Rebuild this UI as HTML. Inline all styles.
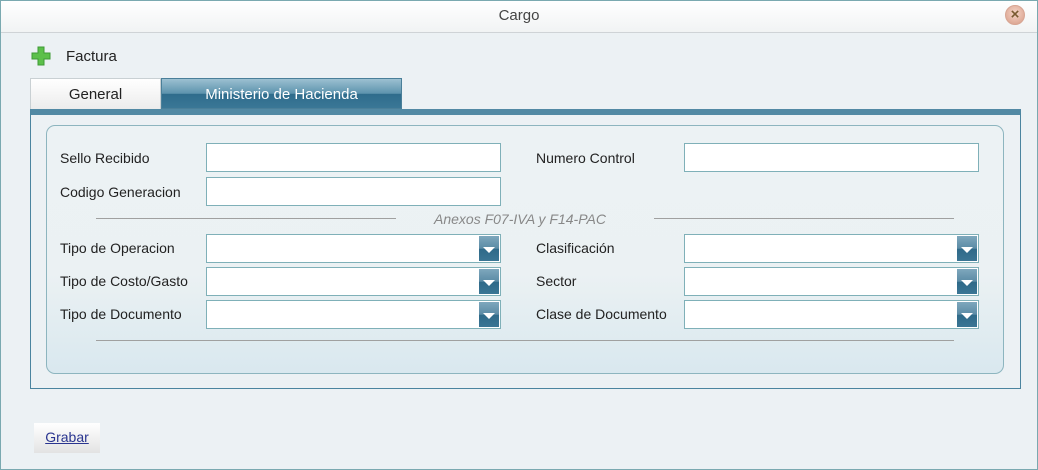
<!DOCTYPE html>
<html><head><style>
*{box-sizing:border-box;margin:0;padding:0}
body{width:1038px;height:470px;overflow:hidden;font-family:"Liberation Sans",Tahoma,sans-serif;font-size:14px;color:#222}
.win{position:absolute;left:0;top:0;width:1038px;height:470px;box-shadow:inset 0 0 0 1px #7aa9b0;background:#ecf1f4}
.title{position:absolute;left:1px;top:1px;width:1036px;height:32px;background:linear-gradient(#fff,#f1f3f4);border-bottom:1px solid #cfd3d6;text-align:center;line-height:30px;font-size:15px;color:#444}
.close{position:absolute;left:1005px;top:5px;width:20px;height:20px;border-radius:50%;background:radial-gradient(circle at 50% 40%,#f6d6c8,#d69a86);border:1px solid #d7a593;text-align:center;line-height:17px;color:#7a5a30;font-size:15px;font-weight:bold}
.abs{position:absolute}
.tab1{left:30px;top:78px;width:131px;height:31px;background:linear-gradient(#fff,#ececec);border:1px solid #c9d0d3;border-bottom:none;text-align:center;line-height:32px;font-size:15px}
.tab2{left:161px;top:78px;width:241px;height:31px;background:linear-gradient(#9cc0d1,#5d93ad 50%,#2f6c8c 52%,#3a7796);border:1px solid #4a7f99;text-align:center;line-height:32px;font-size:15px;color:#fff}
.panel{left:30px;top:109px;width:991px;height:280px;border:1px solid #4b849f;border-top:6px solid #5289a4;background:#ecf1f4}
.box{left:46px;top:125px;width:958px;height:249px;border:1px solid #8db5bf;border-radius:9px;background:linear-gradient(#ecf2f4,#ebf1f3 60%,#d9e8ef)}
.lbl{position:absolute;font-size:14px}
.in{position:absolute;width:295px;height:29px;border:1px solid #7fb0b8;background:#fff}
.dd::after{content:"";position:absolute;right:1px;top:1px;width:20px;height:25px;background:linear-gradient(#7ea7bd,#5b8ba5 50%,#2f6a89 52%,#3a7594)}
.dd::before{content:"";position:absolute;right:5px;top:12px;border-left:6px solid transparent;border-right:6px solid transparent;border-top:6px solid #fff;z-index:2}
.hr{position:absolute;height:1px;background:#a0a0a0}
.btn{left:34px;top:423px;width:66px;height:30px;background:linear-gradient(#fff,#e3e3e3);text-align:center;line-height:29px;color:#2a3590;text-decoration:underline;font-size:14px}
</style></head><body>
<div class="win"></div>
<div class="title">Cargo</div>
<div class="close">×</div>
<svg class="abs" style="left:31px;top:46px" width="20" height="20" viewBox="0 0 20 20"><path d="M7 1h6v6h6v6h-6v6H7v-6H1V7h6z" fill="#5cc04a" stroke="#3e9a35" stroke-width="1"/></svg>
<div class="abs" style="left:66px;top:48px;font-size:15px">Factura</div>
<div class="abs panel"></div>
<div class="abs tab1">General</div>
<div class="abs tab2">Ministerio de Hacienda</div>
<div class="abs box"></div>
<div class="lbl" style="left:60px;top:150px">Sello Recibido</div>
<div class="in" style="left:206px;top:143px"></div>
<div class="lbl" style="left:536px;top:150px">Numero Control</div>
<div class="in" style="left:684px;top:143px"></div>
<div class="lbl" style="left:60px;top:184px">Codigo Generacion</div>
<div class="in" style="left:206px;top:177px"></div>
<div class="hr" style="left:96px;top:218px;width:300px"></div>
<div class="hr" style="left:654px;top:218px;width:300px"></div>
<div class="lbl" style="left:434px;top:211px;color:#888;font-style:italic">Anexos F07-IVA y F14-PAC</div>
<div class="lbl" style="left:60px;top:240px">Tipo de Operacion</div>
<div class="in dd" style="left:206px;top:234px"></div>
<div class="lbl" style="left:536px;top:240px">Clasificación</div>
<div class="in dd" style="left:684px;top:234px"></div>
<div class="lbl" style="left:60px;top:273px">Tipo de Costo/Gasto</div>
<div class="in dd" style="left:206px;top:267px"></div>
<div class="lbl" style="left:536px;top:273px">Sector</div>
<div class="in dd" style="left:684px;top:267px"></div>
<div class="lbl" style="left:60px;top:306px">Tipo de Documento</div>
<div class="in dd" style="left:206px;top:300px"></div>
<div class="lbl" style="left:536px;top:306px">Clase de Documento</div>
<div class="in dd" style="left:684px;top:300px"></div>
<div class="hr" style="left:96px;top:340px;width:858px"></div>
<div class="abs btn">Grabar</div>
</body></html>
